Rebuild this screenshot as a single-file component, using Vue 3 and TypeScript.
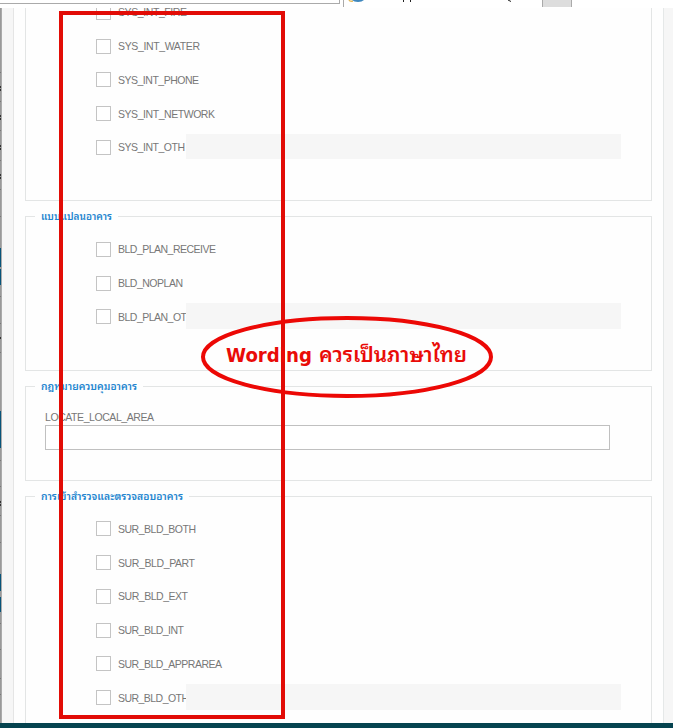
<script setup lang="ts">
interface Choice {
  name: string
  width: number
  other?: boolean
}

interface Group {
  title: string
  titleWidth: number
  kind: string
  choices: Choice[]
  field?: string
}

interface Mark {
  y: number
  h: number
  color: string
}

const groups: Group[] = [
  {
    title: '',
    titleWidth: 0,
    kind: 'systems',
    choices: [
      { name: 'SYS_INT_FIRE', width: 69 },
      { name: 'SYS_INT_WATER', width: 82 },
      { name: 'SYS_INT_PHONE', width: 81 },
      { name: 'SYS_INT_NETWORK', width: 97 },
      { name: 'SYS_INT_OTH', width: 67, other: true },
    ],
  },
  {
    title: 'แบบแปลนอาคาร',
    titleWidth: 71,
    kind: 'plans',
    choices: [
      { name: 'BLD_PLAN_RECEIVE', width: 98 },
      { name: 'BLD_NOPLAN', width: 65 },
      { name: 'BLD_PLAN_OT', width: 69, other: true },
    ],
  },
  {
    title: 'กฎหมายควบคุมอาคาร',
    titleWidth: 96,
    kind: 'laws',
    choices: [],
    field: 'LOCATE_LOCAL_AREA',
  },
  {
    title: 'การเข้าสำรวจและตรวจสอบอาคาร',
    titleWidth: 142,
    kind: 'surveys',
    choices: [
      { name: 'SUR_BLD_BOTH', width: 78 },
      { name: 'SUR_BLD_PART', width: 77 },
      { name: 'SUR_BLD_EXT', width: 70 },
      { name: 'SUR_BLD_INT', width: 66 },
      { name: 'SUR_BLD_APPRAREA', width: 104 },
      { name: 'SUR_BLD_OTH', width: 71, other: true },
    ],
  },
]

const edgeMarks: Mark[] = [
  ...[72, 101, 130, 160, 189, 216, 296, 323, 352, 460, 486, 515, 542, 623, 649, 678, 694].map((y) => ({ y, h: 1, color: '#777' })),
  ...[86, 89, 115, 118, 145, 148, 174, 177, 337, 501, 504].map((y) => ({ y, h: 2, color: '#333' })),
  { y: 248, h: 19, color: '#07547a' },
  { y: 269, h: 16, color: '#07547a' },
  { y: 411, h: 37, color: '#07547a' },
  { y: 574, h: 17, color: '#07547a' },
  { y: 597, h: 15, color: '#07547a' },
]
</script>

<template>
  <div class="screen">
    <header class="browser-edge">
      <div class="address"></div>
      <div class="tab">
        <svg width="198" height="7" viewBox="0 0 198 7">
          <path d="M5 0Q6 2 9 1" fill="none" stroke="#e4b95a" stroke-width="1.5" />
          <path d="M8 0H20Q18 2 14 2Q10 2 8 0Z" fill="#3f87bd" />
          <path d="M59.5 0V2M66.5 0V2M164 0L167 1.5" stroke="#222" stroke-width="1" fill="none" />
        </svg>
      </div>
      <div class="new-tab"></div>
    </header>
    <div class="viewport">
      <svg class="backdrop" width="2" height="715" viewBox="0 8 2 715">
        <rect x="0" y="8" width="2" height="715" fill="#aaa" />
        <rect x="0" y="8" width="1" height="715" fill="#999" />
        <rect v-for="(m, i) in edgeMarks" :key="i" x="0" :y="m.y" width="1" :height="m.h" :fill="m.color" />
      </svg>
      <div class="gutter"></div>
      <main class="form">
        <section v-for="g in groups" :key="g.kind" class="group" :class="g.kind">
          <h2 v-if="g.title" class="legend">
            <svg :width="g.titleWidth" height="17" :viewBox="`0 0 ${g.titleWidth} 17`">
              <text x="0" y="12" :textLength="g.titleWidth" lengthAdjust="spacingAndGlyphs">{{ g.title }}</text>
            </svg>
          </h2>
          <div v-for="c in g.choices" :key="c.name" class="choice">
            <span class="box"></span>
            <span class="label" :class="{ cut: c.other }">
              <svg :width="c.width" height="16" :viewBox="`0 0 ${c.width} 16`">
                <text x="0" y="12" :textLength="c.width">{{ c.name }}</text>
              </svg>
            </span>
            <span v-if="c.other" class="detail"></span>
          </div>
          <div v-if="g.field" class="field">
            <svg width="109" height="16" viewBox="0 0 109 16">
              <text x="0" y="12" textLength="109">{{ g.field }}</text>
            </svg>
            <div class="input"></div>
          </div>
        </section>
      </main>
      <div class="gutter right"></div>
    </div>
    <footer class="taskbar"></footer>
    <div class="highlight"></div>
    <svg class="callout" width="300" height="90" viewBox="198 312 300 90">
      <ellipse cx="347" cy="357" rx="144" ry="39" />
      <text x="226" y="362" textLength="86" lengthAdjust="spacingAndGlyphs">Wording</text>
      <text class="thai" x="319" y="362" textLength="148" lengthAdjust="spacingAndGlyphs">ควรเป็นภาษาไทย</text>
    </svg>
  </div>
</template>

<style>
body {
  margin: 0;
  background: #fff;
}
</style>

<style scoped>
.screen {
  position: relative;
  display: flex;
  flex-direction: column;
  width: 673px;
  height: 728px;
  overflow: hidden;
  background: #fefefe;
  font-family: 'Liberation Sans', 'Noto Sans Thai', sans-serif;
}
svg {
  display: block;
  overflow: visible;
}
.browser-edge {
  display: flex;
  height: 8px;
  flex: none;
  background: #fff;
}
.address {
  box-sizing: border-box;
  width: 340px;
  height: 4px;
  border: solid #aaa;
  border-width: 0 1px 1px 0;
}
.tab {
  box-sizing: border-box;
  width: 199px;
  height: 7px;
  margin-left: 3px;
  border-left: 1px solid #aaa;
}
.new-tab {
  box-sizing: border-box;
  width: 30px;
  height: 7px;
  border: solid #aaa;
  border-width: 0 1px;
  background: #ddd;
}
.viewport {
  display: flex;
  height: 715px;
  flex: none;
}
.backdrop {
  flex: none;
}
.gutter {
  box-sizing: border-box;
  width: 12px;
  flex: none;
  border-right: 1px solid #e5e5e5;
  background: #f6f6f6;
}
.gutter.right {
  width: 10px;
  border-right: 0;
  border-left: 1px solid #e5e8e8;
}
.form {
  box-sizing: border-box;
  width: 649px;
  height: 715px;
  padding: 0 11px;
  overflow: hidden;
}
.group {
  display: flow-root;
  box-sizing: border-box;
  width: 627px;
  margin-bottom: 15px;
  border: 1px solid #e3e5e5;
}
.systems {
  height: 193px;
  border-top: 0;
}
.systems .choice:first-child {
  margin-top: -12.5px;
}
.plans {
  height: 155px;
}
.laws {
  height: 95px;
}
.surveys {
  height: 260px;
}
.legend {
  width: max-content;
  height: 17px;
  margin: -9px 0 7px 9px;
  padding: 0 6px;
  background: #fefefe;
}
.plans .legend {
  margin-bottom: 7.5px;
}
.legend text {
  font-family: 'Noto Sans Thai Looped', Loma, Waree, 'Noto Sans Thai', 'Noto Sans', sans-serif;
  font-size: 10px;
  font-weight: 600;
  fill: #2385cf;
}
.choice {
  display: flex;
  align-items: center;
  height: 33.75px;
  padding-left: 70px;
}
.box {
  box-sizing: border-box;
  width: 15px;
  height: 15px;
  border: 1px solid #c4c4c4;
  background: #fff;
}
.label {
  margin-left: 7px;
}
.label.cut {
  width: 68px;
}
.label text,
.field text {
  font-size: 10.5px;
  fill: #777;
}
.detail {
  position: relative;
  width: 435px;
  height: 25px;
  margin-bottom: 1px;
  background: #f6f6f6;
}
.plans .detail,
.surveys .detail {
  height: 26px;
}
.field {
  padding: 7px 0 0 19px;
}
.input {
  box-sizing: border-box;
  width: 565px;
  height: 25px;
  border: 1px solid #c0c0c0;
  background: #fff;
}
.taskbar {
  height: 5px;
  flex: none;
  background: #05434f;
}
.highlight {
  position: absolute;
  left: 59px;
  top: 11px;
  box-sizing: border-box;
  width: 226px;
  height: 708px;
  border: 4px solid #e20c06;
}
.callout {
  position: absolute;
  left: 198px;
  top: 312px;
}
.callout ellipse {
  fill: none;
  stroke: #ec0805;
  stroke-width: 4;
}
.callout text {
  font-family: 'DejaVu Sans', sans-serif;
  font-size: 20px;
  font-weight: 700;
  fill: #e90b08;
}
.callout .thai {
  font-family: 'Noto Sans Thai Looped', Loma, Waree, 'Noto Sans Thai', 'Noto Sans', sans-serif;
  font-weight: 600;
}
</style>
